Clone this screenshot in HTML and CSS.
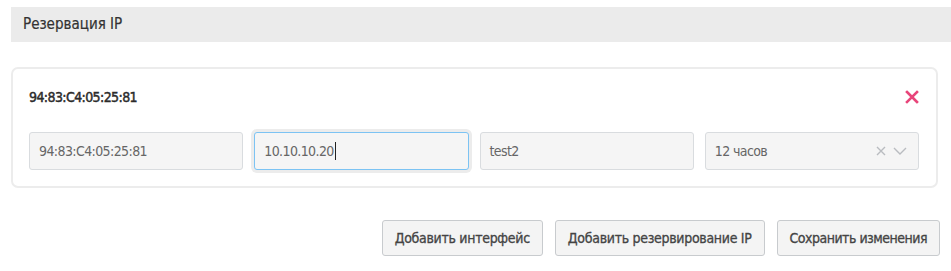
FILE: index.html
```html
<!DOCTYPE html>
<html lang="ru">
<head>
<meta charset="UTF-8" />
<meta name="viewport" content="width=device-width, initial-scale=1" />
<title>Резервация IP</title>
<link rel="stylesheet" href="styles.css">
</head>
<body>

<div class="section-header">Резервация IP</div>

<div class="card">
  <div class="card-head">
    <span class="mac-title">94:83:C4:05:25:81</span>
    <button class="remove-btn" title="Удалить">
      <svg width="14" height="14" viewBox="0 0 14 14"><path d="M2 2 L12 12 M12 2 L2 12" stroke="#e8457a" stroke-width="2.6" stroke-linecap="square" fill="none"/></svg>
    </button>
  </div>
  <div class="fields">
    <div class="field">94:83:C4:05:25:81</div>
    <div class="field focused">10.10.10.20<span class="caret"></span></div>
    <div class="field">test2</div>
    <div class="field select">
      <span>12 часов</span>
      <span class="select-icons">
        <svg width="12" height="12" viewBox="0 0 12 12"><path d="M2 2 L10 10 M10 2 L2 10" stroke="#b9bcc0" stroke-width="1.4" fill="none"/></svg>
        <svg width="16" height="12" viewBox="0 0 16 12"><path d="M2 3 L8 9 L14 3" stroke="#b9bcc0" stroke-width="1.4" fill="none"/></svg>
      </span>
    </div>
  </div>
</div>

<div class="actions">
  <button class="btn">Добавить интерфейс</button>
  <button class="btn">Добавить резервирование IP</button>
  <button class="btn">Сохранить изменения</button>
</div>

</body>
</html>
```

FILE: styles.css
```css
/* резервация IP */
body {
  margin: 0;
  background: #fff;
  font-family: 'DejaVu Sans Condensed', 'Liberation Sans', sans-serif;
  color: #333;
}
.section-header {
  margin: 7px 0 0 11px;
  height: 35px;
  line-height: 35px;
  padding-left: 12px;
  background: #ebebeb;
  font-size: 15px;
  color: #333;
  -webkit-text-stroke: 0.2px #333;
}
.card {
  margin: 25px 13px 0 11px;
  border: 2px solid #ececec;
  border-radius: 7px;
  padding: 17px 17px 16px 16px;
}
.card-head {
  display: flex;
  justify-content: space-between;
  align-items: center;
  height: 22px;
  margin-bottom: 24px;
}
.mac-title {
  font-size: 14px;
  letter-spacing: -0.6px;
  color: #2b2b2b;
  -webkit-text-stroke: 0.45px #2b2b2b;
}
.remove-btn {
  background: none;
  border: none;
  padding: 0;
  cursor: pointer;
  display: flex;
}
.fields {
  display: grid;
  grid-template-columns: repeat(4, 1fr);
  gap: 11px;
}
.field {
  height: 38px;
  box-sizing: border-box;
  border: 1px solid #d9dcdf;
  border-radius: 3px;
  background: #f5f5f5;
  padding: 0 9px;
  display: flex;
  align-items: center;
  font-size: 14px;
  letter-spacing: -0.6px;
  color: #666;
}
.field.focused {
  border-color: #7cc3f3;
  box-shadow: 0 0 0 3px #ececec;
}
.caret {
  display: inline-block;
  width: 1px;
  height: 18px;
  background: #222;
  margin-left: 1px;
}
.select {
  justify-content: space-between;
}
.select-icons {
  display: flex;
  align-items: center;
  gap: 5px;
  margin-right: 1px;
}
.actions {
  display: flex;
  justify-content: flex-end;
  gap: 12px;
  margin: 32px 11px 0 0;
}
.btn {
  height: 36px;
  padding: 0 12px;
  border: 1px solid #c8cbce;
  border-radius: 3px;
  background: #f4f4f4;
  font-family: inherit;
  font-size: 14px;
  letter-spacing: -0.3px;
  color: #444;
  -webkit-text-stroke: 0.3px #444;
  cursor: pointer;
}
.btn:last-child {
  letter-spacing: -0.5px;
}
```
